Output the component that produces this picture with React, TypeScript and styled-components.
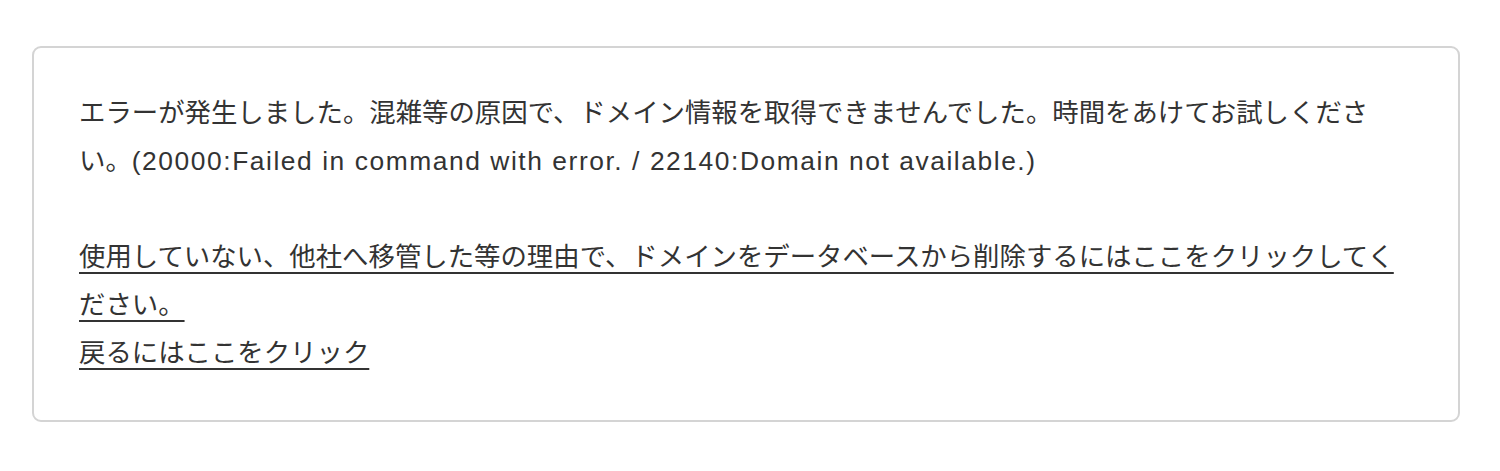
import React from 'react';
import styled, { createGlobalStyle } from 'styled-components';

const GlobalStyle = createGlobalStyle`
  html, body {
    margin: 0;
    padding: 0;
    background: #ffffff;
  }
  body {
    font-family: "Liberation Sans", "Noto Sans CJK JP", sans-serif;
    color: #333333;
  }
`;

const Page = styled.div`
  padding: 46px 40px 0 32px;
`;

const Card = styled.div`
  border: 2px solid #d4d4d4;
  border-radius: 9px;
  background: #ffffff;
  padding: 41px 50px 43px 45px;
  font-size: 26.4px;
  line-height: 48px;
  line-break: strict;
`;

const Message = styled.p`
  margin: 0;
`;

const Code = styled.span`
  letter-spacing: 1.55px;
`;

const Spacer = styled.div`
  height: 48px;
`;

const Link = styled.a`
  color: #333333;
  text-decoration: underline;
  text-underline-offset: 6px;
  text-decoration-thickness: 2px;
  cursor: pointer;
`;

const LinkRow = styled.div``;

const App = () => {
  return (
    <>
      <GlobalStyle />
      <Page>
        <Card>
          <Message>
            エラーが発生しました。混雑等の原因で、ドメイン情報を取得できませんでした。時間をあけてお試しください。
            <Code>(20000:Failed in command with error. / 22140:Domain not available.)</Code>
          </Message>
          <Spacer />
          <LinkRow>
            <Link>使用していない、他社へ移管した等の理由で、ドメインをデータベースから削除するにはここをクリックしてください。</Link>
          </LinkRow>
          <LinkRow>
            <Link>戻るにはここをクリック</Link>
          </LinkRow>
        </Card>
      </Page>
    </>
  );
};

export default App;
